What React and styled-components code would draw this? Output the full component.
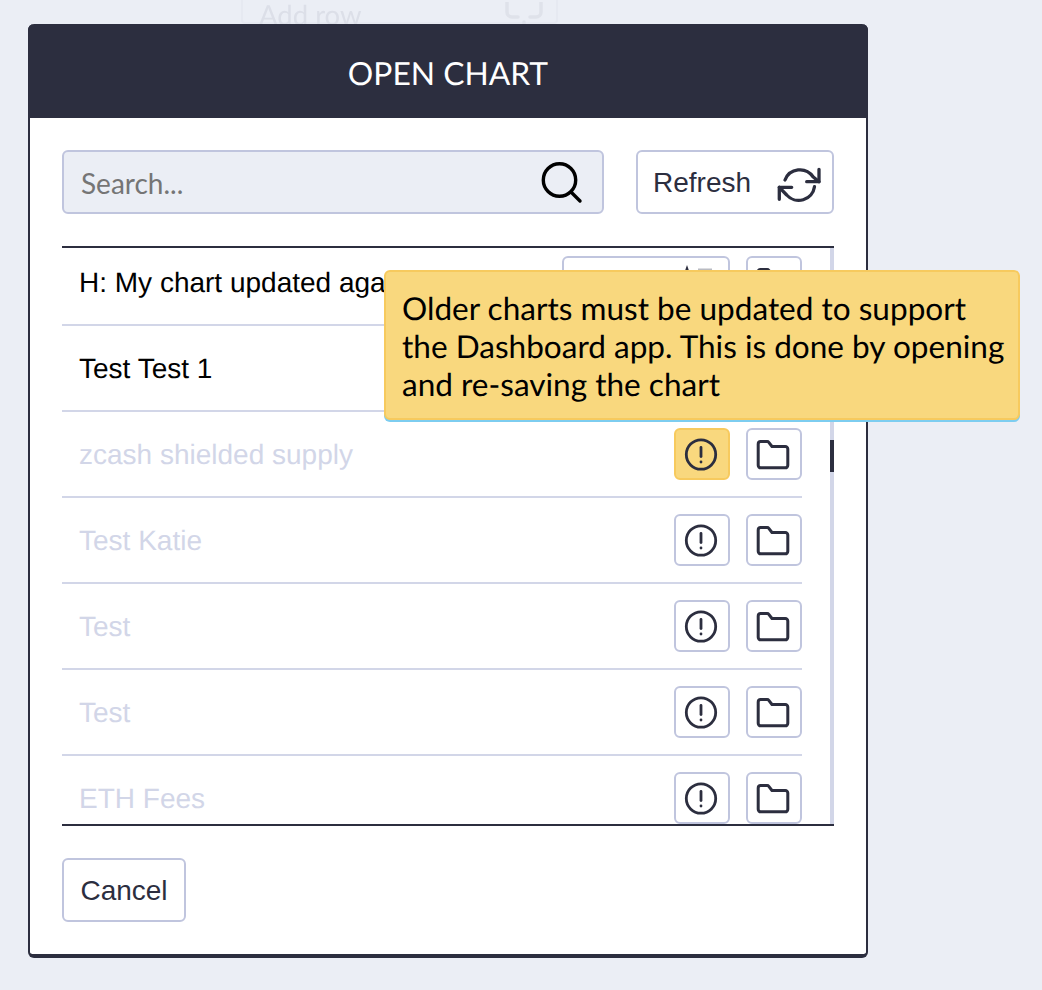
import styled, { createGlobalStyle } from 'styled-components';

const GlobalStyle = createGlobalStyle`
  html, body {
    margin: 0;
    padding: 0;
    height: 990px;
    overflow: hidden;
    background: #ebeef5;
    text-rendering: geometricPrecision;
  }
  * {
    box-sizing: border-box;
  }
`;

const charts = [
  { name: 'H: My chart updated again', wide: true },
  { name: 'Test Test 1', wide: true },
  { name: 'zcash shielded supply', active: true, old: true },
  { name: 'Test Katie', old: true },
  { name: 'Test', old: true },
  { name: 'Test', old: true },
  { name: 'ETH Fees', old: true },
];

function AlertIcon() {
  return (
    <svg width="36" height="36" viewBox="0 0 36 36" fill="none" stroke="#2c2e3f" strokeWidth="2.8" strokeLinecap="round">
      <circle cx="17" cy="18.5" r="14.7" />
      <line x1="17" y1="11.5" x2="17" y2="20.5" />
      <line x1="17" y1="26" x2="17" y2="26.1" />
    </svg>
  );
}

function FolderIcon() {
  return (
    <svg width="36" height="36" viewBox="0 0 36 36" fill="none" stroke="#2c2e3f" strokeWidth="3" strokeLinejoin="round">
      <path d="M2.2 8a2.5 2.5 0 0 1 2.5-2.5h6.5a2 2 0 0 1 1.6.8l3.2 4.2h13.3a2.5 2.5 0 0 1 2.5 2.5v16.3a2.5 2.5 0 0 1-2.5 2.5h-24.6a2.5 2.5 0 0 1-2.5-2.5z" />
    </svg>
  );
}

// only the top two pixels of this one show above the tooltip
function DashboardIcon() {
  return (
    <svg width="36" height="36" viewBox="0 0 36 36" fill="none" strokeWidth="3">
      <path d="M2 20L7 5.5L12 20" stroke="#2c2e3f" />
      <path d="M18 5.5H32" stroke="#b9bbc2" strokeWidth="2" />
    </svg>
  );
}

function SearchIcon() {
  return (
    <svg width="44" height="44" viewBox="0 0 44 44" fill="none" stroke="#000" strokeWidth="3.4" strokeLinecap="round">
      <circle cx="19.5" cy="20" r="16.2" />
      <line x1="31" y1="32" x2="40" y2="41" />
    </svg>
  );
}

function RefreshIcon() {
  return (
    <svg width="46" height="40" viewBox="0 0 46 40" fill="none" stroke="#2c2e3f" strokeWidth="3.3" strokeLinecap="round" strokeLinejoin="round">
      <path d="M43 4.3V16.7H30.7" />
      <path d="M3.3 34.3V22.3H15.7" />
      <path d="M9 15A16 16 0 0 1 37 11.7L43 16.7" />
      <path d="M3.3 22.3L10.7 30A16 16 0 0 0 38.5 21.7" />
    </svg>
  );
}

function CommentIcon() {
  return (
    <svg width="38" height="24" viewBox="0 0 38 24" fill="none" stroke="#dfe2ea" strokeWidth="3.5" strokeLinecap="round">
      <path d="M13 15H7a5 5 0 0 1-5-5V-4M36 -4V10a5 5 0 0 1-5 5H25" />
      <path d="M19 20V24" />
    </svg>
  );
}

export default function App() {
  return (
    <Page>
      <GlobalStyle />
      <Backdrop>
        <AddRow>
          <span>Add row</span>
          <CommentIcon />
        </AddRow>
      </Backdrop>
      <Modal>
        <Header>OPEN CHART</Header>
        <Body>
          <Toolbar>
            <SearchBox>
              <SearchInput placeholder="Search..." />
              <SearchIcon />
            </SearchBox>
            <RefreshButton>
              <span>Refresh</span>
              <RefreshIcon />
            </RefreshButton>
          </Toolbar>
          <ListWrap>
            <List>
              {charts.map((chart, i) => (
                <Row key={i} $first={i === 0}>
                  <Name $old={chart.old}>{chart.name}</Name>
                  <Actions>
                    {chart.wide ? (
                      <IconButton $wide>
                        <DashboardIcon />
                      </IconButton>
                    ) : (
                      <IconButton $active={chart.active}>
                        <AlertIcon />
                      </IconButton>
                    )}
                    <IconButton>
                      <FolderIcon />
                    </IconButton>
                  </Actions>
                </Row>
              ))}
            </List>
            <ScrollTrack>
              <ScrollThumb />
            </ScrollTrack>
          </ListWrap>
          <Footer>
            <CancelButton>Cancel</CancelButton>
          </Footer>
        </Body>
        <Tooltip>
          Older charts must be updated to support the Dashboard app. This is done by opening and re-saving the chart
        </Tooltip>
      </Modal>
    </Page>
  );
}

const Page = styled.div`
  position: relative;
  width: 1042px;
  height: 990px;
  overflow: hidden;
  background: #ebeef5;
`;

const Backdrop = styled.div`
  display: flex;
  padding-left: 241px;
  filter: blur(0.7px);
`;

const AddRow = styled.div`
  width: 317px;
  height: 60px;
  margin-top: -36px;
  padding: 33px 13px 0 16px;
  display: flex;
  justify-content: space-between;
  border: 2px solid #e6e9f1;
  border-radius: 4px;
  font-family: 'Lato', sans-serif;
  font-size: 27.5px;
  line-height: 32px;
  color: #dcdfe8;

  svg {
    margin-top: 3px;
  }
`;

const Modal = styled.div`
  position: absolute;
  left: 28px;
  top: 24px;
  width: 840px;
  height: 934px;
  display: flex;
  flex-direction: column;
  background: #fff;
  border-style: solid;
  border-color: #2c2e3f;
  border-width: 0 2px 4px 2px;
  border-radius: 6px;
`;

const Header = styled.div`
  height: 94px;
  flex-shrink: 0;
  margin: 0 -2px;
  padding-top: 4px;
  display: flex;
  align-items: center;
  justify-content: center;
  background: #2c2e3f;
  border-radius: 6px 6px 0 0;
  color: #fff;
  font-family: 'Lato', sans-serif;
  font-size: 31.8px;
`;

const Body = styled.div`
  flex: 1;
  display: flex;
  flex-direction: column;
  padding: 32px 32px 0;
`;

const Toolbar = styled.div`
  display: flex;
  justify-content: space-between;
  height: 64px;
`;

const SearchBox = styled.div`
  width: 542px;
  display: flex;
  align-items: center;
  padding: 0 18px 0 17px;
  background: #ebeef5;
  border: 2px solid #c0c5de;
  border-radius: 6px;
`;

const SearchInput = styled.input`
  flex: 1;
  min-width: 0;
  border: 0;
  outline: 0;
  padding: 2px 0 0;
  background: transparent;
  font-family: 'Lato', sans-serif;
  font-size: 28px;
  color: #2c2e3f;

  &::placeholder {
    color: #757575;
    opacity: 1;
  }
`;

const RefreshButton = styled.button`
  width: 198px;
  display: flex;
  align-items: center;
  justify-content: space-between;
  padding: 0 10px 0 15px;
  background: #fff;
  border: 2px solid #c0c5de;
  border-radius: 6px;
  font-family: 'Liberation Sans', sans-serif;
  font-size: 28px;
  color: #2c2e3f;

  span {
    margin-top: 2px;
  }

  svg {
    margin-top: 6px;
  }
`;

const ListWrap = styled.div`
  position: relative;
  margin-top: 32px;
  height: 580px;
  border-top: 2px solid #2c2e3f;
  border-bottom: 2px solid #2c2e3f;
  overflow: hidden;
`;

const List = styled.div`
  padding-right: 32px;
`;

const Row = styled.div`
  display: flex;
  align-items: center;
  justify-content: space-between;
  padding: ${(p) => (p.$first ? '8px' : '16px')} 0 16px;
  border-bottom: 2px solid #d2d6e8;
`;

const Name = styled.div`
  padding: 2px 0 0 17px;
  font-family: 'Liberation Sans', sans-serif;
  font-size: 28px;
  white-space: nowrap;
  color: ${(p) => (p.$old ? '#d2d6e8' : '#000')};
`;

const Actions = styled.div`
  display: flex;
  gap: 16px;
`;

const IconButton = styled.button`
  width: ${(p) => (p.$wide ? '168px' : '56px')};
  height: 52px;
  display: flex;
  align-items: center;
  justify-content: ${(p) => (p.$wide ? 'flex-end' : 'center')};
  padding: 0 ${(p) => (p.$wide ? '12px' : '0')} 0 0;
  background: ${(p) => (p.$active ? '#f9d87e' : '#fff')};
  border: 2px solid ${(p) => (p.$active ? '#f7ca5e' : '#c0c5de')};
  border-radius: 6px;
`;

const ScrollTrack = styled.div`
  position: absolute;
  right: 0;
  top: 0;
  bottom: 0;
  width: 4px;
  background: #d2d6e8;
`;

const ScrollThumb = styled.div`
  position: absolute;
  top: 192px;
  width: 4px;
  height: 32px;
  background: #2c2e3f;
`;

const Footer = styled.div`
  padding-top: 32px;
`;

const CancelButton = styled.button`
  width: 124px;
  height: 64px;
  padding: 2px 0 0;
  background: #fff;
  border: 2px solid #c0c5de;
  border-radius: 6px;
  font-family: 'Liberation Sans', sans-serif;
  font-size: 28px;
  color: #2c2e3f;
`;

const Tooltip = styled.div`
  position: absolute;
  left: 354px;
  top: 246px;
  width: 636px;
  height: 150px;
  padding: 17px 10px 0 16px;
  background: #f9d87e;
  border: 2px solid #f7ca5e;
  border-radius: 6px;
  box-shadow: 0 2px 0 #7dcdf0;
  font-family: 'Lato', sans-serif;
  font-size: 31.55px;
  line-height: 38px;
  color: #000;
`;
